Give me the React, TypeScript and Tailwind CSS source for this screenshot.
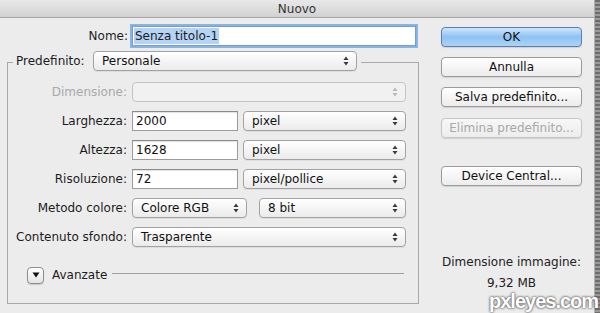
import React from "react";

const Arrows = ({ disabled }: { disabled?: boolean }) => (
  <svg width="6" height="10" viewBox="0 0 6 10" className="shrink-0">
    <path d="M3 0.5 L5.5 4 H0.5Z" fill={disabled ? "#b8b8b8" : "#3a3a3a"} />
    <path d="M3 9.5 L5.5 6 H0.5Z" fill={disabled ? "#b8b8b8" : "#3a3a3a"} />
  </svg>
);

function Select({
  className,
  children,
  disabled,
}: {
  className: string;
  children?: React.ReactNode;
  disabled?: boolean;
}) {
  return (
    <div
      className={`h-[20px] flex items-center justify-between rounded-[4px] border pl-[8px] pr-[7px] shrink-0 ${
        disabled
          ? "border-[#c4c4c4] bg-[#f1f1f1] text-[#a6a6a6]"
          : "border-[#a2a2a2] bg-linear-to-b from-white to-[#ebebeb] text-[#111] shadow-[0_1px_0_rgba(0,0,0,0.06)]"
      } ${className}`}
    >
      <span className="leading-none">{children}</span>
      <Arrows disabled={disabled} />
    </div>
  );
}

function Input({ className, value }: { className: string; value: string }) {
  return (
    <div
      className={`h-[20px] flex items-center border border-[#9c9c9c] border-t-[#8a8a8a] bg-white pl-[3px] text-[#111] shrink-0 shadow-[inset_0_1px_1px_rgba(0,0,0,0.12)] ${className}`}
    >
      <span className="leading-none">{value}</span>
    </div>
  );
}

function Button({
  children,
  primary,
  disabled,
}: {
  children: React.ReactNode;
  primary?: boolean;
  disabled?: boolean;
}) {
  const cls = primary
    ? "border-[#5a7db3] bg-linear-to-b from-[#cfe6fb] via-[#8fc2f2] to-[#a9d4f7] text-[#111]"
    : disabled
    ? "border-[#c6c6c6] bg-linear-to-b from-[#f7f7f7] to-[#ededed] text-[#a8a8a8]"
    : "border-[#9b9b9b] bg-linear-to-b from-white to-[#ececec] text-[#111]";
  return (
    <div
      className={`h-[20px] w-[141px] flex items-center justify-center rounded-[4px] border shadow-[0_1px_1px_rgba(0,0,0,0.12)] ${cls}`}
    >
      {children}
    </div>
  );
}

function Row({
  label,
  disabled,
  children,
}: {
  label: string;
  disabled?: boolean;
  children: React.ReactNode;
}) {
  return (
    <div className="flex items-center h-[20px]">
      <div
        className={`w-[120px] text-right pr-[1px] ${
          disabled ? "text-[#a8a8a8]" : "text-[#1c1c1c]"
        }`}
      >
        {label}
      </div>
      <div className="flex items-center ml-[4px]">{children}</div>
    </div>
  );
}

export default function App() {
  return (
    <div
      className="relative w-[600px] h-[313px] flex overflow-hidden text-[12px] text-[#1c1c1c]"
      style={{ fontFamily: '"DejaVu Sans", "Liberation Sans", sans-serif' }}
    >
      <div className="w-[595px] h-full flex flex-col bg-[#ececec] border-r border-[#b0b0b0]">
        {/* title bar */}
        <div className="h-[18px] shrink-0 flex items-center justify-center bg-linear-to-b from-[#e8e8e8] to-[#d2d2d2] border-b border-[#a6a6a6] text-[#333] text-[12px]">
          <span>Nuovo</span>
        </div>

        <div className="flex flex-1">
          {/* left column */}
          <div className="w-[430px] flex flex-col">
            <div className="flex items-center h-[20px] mt-[8px]">
              <div className="w-[128px] text-right">Nome:</div>
              <div className="ml-[4px] h-[20px] w-[284px] flex items-center bg-white border border-[#7a9ccd] ring-[2px] ring-[#86b3e8] pl-[1px]">
                <span className="bg-[#b5d3f5] leading-[16px] px-[1px]">Senza titolo-1</span>
              </div>
            </div>

            <div className="ml-[7px] mt-[16px] w-[412px] h-[242px] border border-[#a9a9a9] flex flex-col">
              {/* legend */}
              <div className="-mt-[12px] ml-[5px] self-start flex items-center bg-[#ececec] pl-[3px] pr-[4px]">
                <span className="w-[75px]">Predefinito:</span>
                <Select className="ml-[2px] w-[264px]">Personale</Select>
              </div>

              <div className="mt-[11px] flex flex-col gap-[9px]">
                <Row label="Dimensione:" disabled>
                  <Select className="w-[274px]" disabled />
                </Row>
                <Row label="Larghezza:">
                  <Input className="w-[106px]" value="2000" />
                  <Select className="ml-[5px] w-[163px]">pixel</Select>
                </Row>
                <Row label="Altezza:">
                  <Input className="w-[106px]" value="1628" />
                  <Select className="ml-[5px] w-[163px]">pixel</Select>
                </Row>
                <Row label="Risoluzione:">
                  <Input className="w-[106px]" value="72" />
                  <Select className="ml-[5px] w-[163px]">pixel/pollice</Select>
                </Row>
                <Row label="Metodo colore:">
                  <Select className="w-[115px]">Colore RGB</Select>
                  <Select className="ml-[12px] w-[147px]">8 bit</Select>
                </Row>
                <Row label="Contenuto sfondo:">
                  <Select className="w-[274px]">Trasparente</Select>
                </Row>
              </div>

              <div className="mt-[19px] ml-[19px] flex items-center">
                <div className="w-[17px] h-[17px] rounded-[4px] border border-[#8f8f8f] bg-linear-to-b from-white to-[#e4e4e4] flex items-center justify-center shadow-[0_1px_1px_rgba(0,0,0,0.15)]">
                  <svg width="8" height="6" viewBox="0 0 8 6">
                    <path d="M0.5 0.5 H7.5 L4 5.5Z" fill="#111" />
                  </svg>
                </div>
                <span className="ml-[8px]">Avanzate</span>
                <div className="ml-[5px] w-[292px] h-px bg-[#9e9e9e] -mt-[4px]" />
              </div>
            </div>
          </div>

          {/* right column */}
          <div className="flex flex-col ml-[11px] mt-[9px]">
            <Button primary>OK</Button>
            <div className="mt-[10px]">
              <Button>Annulla</Button>
            </div>
            <div className="mt-[10px]">
              <Button>Salva predefinito...</Button>
            </div>
            <div className="mt-[11px]">
              <Button disabled>Elimina predefinito...</Button>
            </div>
            <div className="mt-[28px]">
              <Button>Device Central...</Button>
            </div>
            <div className="mt-[68px] w-[141px] text-center leading-[16px] text-[#222]">
              Dimensione immagine:
            </div>
            <div className="mt-[5px] w-[141px] text-center leading-[16px] text-[#222]">
              9,32 MB
            </div>
          </div>
        </div>
      </div>
      <div className="w-[5px] h-full bg-[repeating-linear-gradient(180deg,#6e6e6e_0px,#6e6e6e_2px,#9a9a9a_2px,#9a9a9a_4px)]" />
      <div
        className="absolute left-[489px] top-[291px] text-white font-bold text-[20px] leading-[20px] tracking-[-1px] [text-shadow:0_0_2px_#444,0_0_3px_#777]"
        style={{ fontFamily: '"Liberation Sans", Arial, sans-serif' }}
      >
        pxleyes.com
      </div>
    </div>
  );
}
